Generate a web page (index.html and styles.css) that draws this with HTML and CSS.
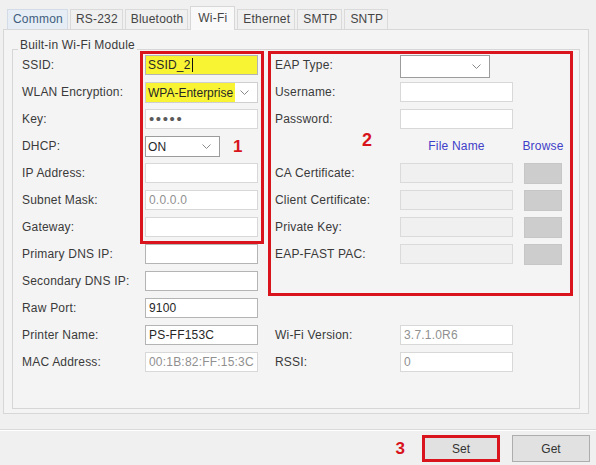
FILE: index.html
```html
<!DOCTYPE html>
<html lang="en">
<head>
<meta charset="utf-8">
<title>Printer Settings – Wi-Fi</title>
<link rel="stylesheet" href="styles.css">
</head>
<body>
<div class="window">
  <nav class="tabs">
    <div class="tab tab-hot">Common</div>
    <div class="tab">RS-232</div>
    <div class="tab">Bluetooth</div>
    <div class="tab tab-active">Wi-Fi</div>
    <div class="tab">Ethernet</div>
    <div class="tab">SMTP</div>
    <div class="tab">SNTP</div>
  </nav>

  <section class="panel">
    <div class="group">
      <div class="group-title">Built-in Wi-Fi Module</div>
      <div class="cols">
        <div class="col col-left">
          <label class="lbl">SSID:</label>
          <div class="field field-hl">SSID_2<span class="caret"></span></div>

          <label class="lbl">WLAN Encryption:</label>
          <div class="combo"><span class="combo-hl">WPA-Enterprise</span><svg class="chev" width="9" height="5" viewBox="0 0 9 5"><path d="M.5.5 4.5 4.5 8.5.5" fill="none" stroke="#8a8a8a"/></svg></div>

          <label class="lbl">Key:</label>
          <div class="field field-soft dots">•••••</div>

          <label class="lbl">DHCP:</label>
          <div class="pair">
            <div class="combo combo-dark combo-short"><span>ON</span><svg class="chev" width="9" height="5" viewBox="0 0 9 5"><path d="M.5.5 4.5 4.5 8.5.5" fill="none" stroke="#8a8a8a"/></svg></div>
            <span class="num">1</span>
          </div>

          <label class="lbl">IP Address:</label>
          <div class="field field-soft"></div>

          <label class="lbl">Subnet Mask:</label>
          <div class="field field-soft field-off">0.0.0.0</div>

          <label class="lbl">Gateway:</label>
          <div class="field field-soft"></div>

          <label class="lbl">Primary DNS IP:</label>
          <div class="field"></div>

          <label class="lbl">Secondary DNS IP:</label>
          <div class="field"></div>

          <label class="lbl">Raw Port:</label>
          <div class="field">9100</div>

          <label class="lbl">Printer Name:</label>
          <div class="field">PS-FF153C</div>

          <label class="lbl">MAC Address:</label>
          <div class="field field-soft field-off">00:1B:82:FF:15:3C</div>
        </div>

        <div class="col col-right">
          <label class="lbl">EAP Type:</label>
          <div class="combo combo-dark combo-eap"><span></span><svg class="chev" width="9" height="5" viewBox="0 0 9 5"><path d="M.5.5 4.5 4.5 8.5.5" fill="none" stroke="#8a8a8a"/></svg></div>

          <label class="lbl">Username:</label>
          <div class="field field-soft"></div>

          <label class="lbl">Password:</label>
          <div class="field field-soft"></div>

          <span class="lbl num num-2">2</span>
          <span class="head">File Name</span>
          <span class="head head-browse">Browse</span>

          <label class="lbl">CA Certificate:</label>
          <div class="field field-dis"></div>
          <div class="browse"></div>

          <label class="lbl">Client Certificate:</label>
          <div class="field field-dis"></div>
          <div class="browse"></div>

          <label class="lbl">Private Key:</label>
          <div class="field field-dis"></div>
          <div class="browse"></div>

          <label class="lbl">EAP-FAST PAC:</label>
          <div class="field field-dis"></div>
          <div class="browse"></div>

          <div class="spacer"></div>

          <label class="lbl">Wi-Fi Version:</label>
          <div class="field field-soft field-off">3.7.1.0R6</div>

          <label class="lbl">RSSI:</label>
          <div class="field field-soft field-off">0</div>
        </div>
      </div>

      <div class="mark mark-1"></div>
      <div class="mark mark-2"></div>
    </div>
  </section>

  <footer class="actions">
    <span class="num num-3">3</span>
    <button class="btn btn-set">Set</button>
    <button class="btn btn-get">Get</button>
  </footer>
</div>
</body>
</html>
```

FILE: styles.css
```css
html, body {
  margin: 0;
  padding: 0;
}

body {
  background: #f0f0f0;
  font: 12px "Liberation Sans", Arial, sans-serif;
  letter-spacing: 0.2px;
  color: #363636;
}

.window {
  width: 596px;
  height: 465px;
  overflow: hidden;
}

/* ---- tab strip ---- */
.tabs {
  display: flex;
  align-items: flex-end;
  gap: 2px;
  height: 29px;
  padding-left: 7px;
  position: relative;
  z-index: 1;
}

.tab {
  height: 20px;
  box-sizing: border-box;
  line-height: 19px;
  padding: 0 4px 0 5px;
  border: 1px solid #dadada;
  border-bottom: 0;
  background: #f0f0f0;
  color: #444;
  white-space: nowrap;
}

.tab-hot {
  background: #e6edf4;
  border-color: #d3dce6;
  color: #3f5d80;
}

.tab-active {
  height: 24px;
  line-height: 22px;
  margin-bottom: -1px;
  padding: 0 7px;
  background: #f9f9f9;
  border-color: #d7d7d7;
}

/* ---- tab page ---- */
.panel {
  margin-left: 3px;
  width: 586px;
  box-sizing: border-box;
  border: 1px solid #d7d7d7;
  background: #f4f4f4;
  padding: 19px 8px 4px;
}

.group {
  position: relative;
  height: 360px;
  box-sizing: border-box;
  border: 1px solid #d6d6d6;
  padding: 0 17px 0 9px;
}

.group-title {
  display: table;
  margin: -12px 0 0 -4px;
  padding: 0 2px;
  line-height: 14px;
  background: #f4f4f4;
  color: #3a3a3a;
}

.cols {
  display: flex;
  gap: 17px;
  margin-top: 3px;
}

.col {
  display: grid;
  grid-auto-rows: 20px;
  row-gap: 7px;
  align-items: center;
}

.col-left {
  grid-template-columns: 123px 113px;
}

.col-right {
  grid-template-columns: 125px 113px 11px 38px;
}

.lbl {
  grid-column: 1;
  white-space: nowrap;
  color: #3a3a3a;
}

/* ---- inputs ---- */
.field {
  grid-column: 2;
  height: 20px;
  box-sizing: border-box;
  border: 1px solid #b4b4b4;
  background: #fff;
  padding: 0 3px;
  line-height: 18px;
  white-space: nowrap;
  overflow: hidden;
  color: #262626;
}

.field-soft {
  border-color: #d8d8d8;
}

.field-off {
  color: #909090;
}

.field-dis {
  background: #f0f0f0;
  border-color: #dadada;
}

.field-hl {
  background: #f8f433;
  padding-left: 2px;
}

.caret {
  display: inline-block;
  width: 1px;
  height: 14px;
  margin-left: 1px;
  vertical-align: -3px;
  background: #111;
}

.dots {
  font-size: 15px;
  letter-spacing: 1.6px;
  color: #5a5a5a;
  line-height: 17px;
}

.combo {
  grid-column: 2;
  align-self: start;
  height: 21px;
  box-sizing: border-box;
  border: 1px solid #cfcfcf;
  background: #fff;
  display: flex;
  align-items: center;
  justify-content: space-between;
  padding: 0 8px 0 0;
  color: #262626;
}

.combo > span {
  padding-left: 2px;
}

.combo-hl {
  height: 100%;
  display: flex;
  align-items: center;
  padding: 0 2px 0 2px;
  letter-spacing: 0;
  background: #f8f433;
}

.combo-dark {
  border-color: #9c9c9c;
}

.combo-short {
  width: 75px;
}

.combo-eap {
  width: 90px;
  height: 23px;
}

.chev {
  flex: none;
}

.pair {
  grid-column: 2;
  align-self: start;
  display: flex;
  align-items: center;
  gap: 13px;
}

/* ---- numbered callouts ---- */
.num {
  color: #d8131c;
  font-weight: bold;
  font-size: 17px;
  line-height: 17px;
  letter-spacing: 0;
}

.num-2 {
  align-self: start;
  margin-top: -4px;
  padding-left: 87px;
  font-size: 18px;
}

.num-3 {
  margin-right: 17px;
}

/* ---- certificate table ---- */
.head {
  grid-column: 2;
  justify-self: center;
  color: #4040c8;
  white-space: nowrap;
}

.head-browse {
  grid-column: 4;
}

.browse {
  grid-column: 4;
  height: 21px;
  align-self: start;
  box-sizing: border-box;
  background: #cdcdcd;
  border: 1px solid #c6c6c6;
}

.spacer {
  grid-column: 1 / -1;
  grid-row: span 2;
}

/* ---- highlight frames ---- */
.mark {
  position: absolute;
  box-sizing: border-box;
  border: 3px solid #d9141c;
  pointer-events: none;
}

.mark-1 {
  left: 127px;
  top: 1px;
  width: 124px;
  height: 193px;
}

.mark-2 {
  left: 255px;
  top: 1px;
  width: 305px;
  height: 245px;
}

/* ---- command bar ---- */
.actions {
  display: flex;
  justify-content: flex-end;
  align-items: center;
  margin-top: 15px;
  border-top: 1px solid #dadada;
  box-shadow: inset 0 1px 0 #ffffff;
  padding: 5px 6px 0 0;
}

.btn {
  width: 78px;
  height: 27px;
  box-sizing: border-box;
  border: 1px solid #adadad;
  background: #e1e1e1;
  font: 12px "Liberation Sans", Arial, sans-serif;
  color: #333;
  padding: 0;
}

.btn-set {
  border: 3px solid #d9141c;
  margin-right: 12px;
}
```
